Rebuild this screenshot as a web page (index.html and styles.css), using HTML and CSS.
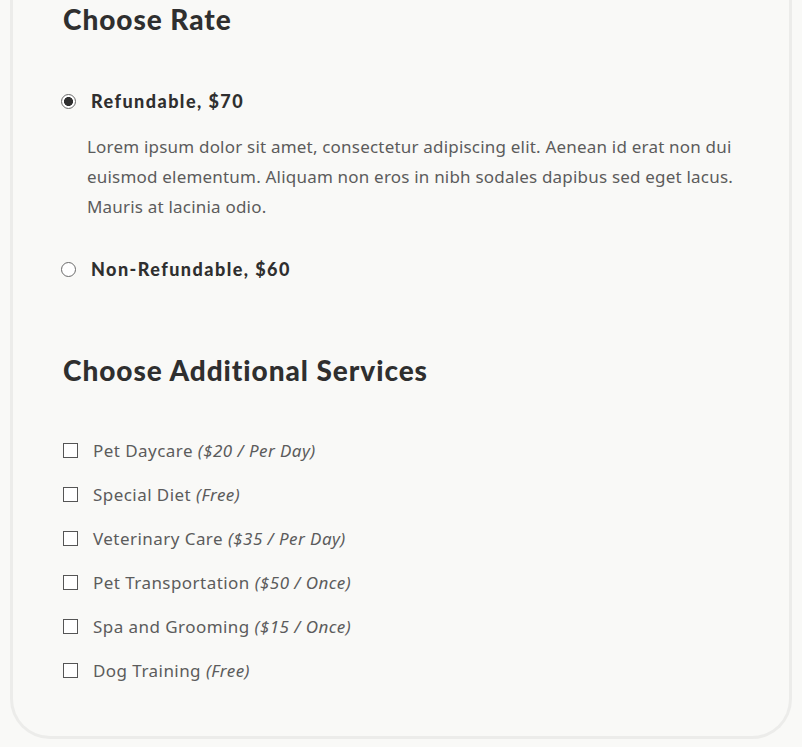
FILE: index.html
```html
<!DOCTYPE html>
<html lang="en">
<head>
<meta charset="utf-8">
<title>Choose Rate</title>
<link rel="stylesheet" href="styles.css">
</head>
<body>
<div class="page">
  <section class="card">
    <h2 class="title">Choose Rate</h2>
    <div class="rates">
      <label class="rate">
        <input type="radio" name="rate" class="radio" checked>
        <span class="rate-name">Refundable, $70</span>
      </label>
      <p class="rate-desc">Lorem ipsum dolor sit amet, consectetur adipiscing elit. Aenean id erat non dui euismod elementum. Aliquam non eros in nibh sodales dapibus sed eget lacus. Mauris at lacinia odio.</p>
      <label class="rate rate-second">
        <input type="radio" name="rate" class="radio">
        <span class="rate-name">Non-Refundable, $60</span>
      </label>
    </div>

    <h2 class="title title-services">Choose Additional Services</h2>
    <ul class="services">
      <li><label class="service"><input type="checkbox" class="check"><span>Pet Daycare <em>($20 / Per Day)</em></span></label></li>
      <li><label class="service"><input type="checkbox" class="check"><span>Special Diet <em>(Free)</em></span></label></li>
      <li><label class="service"><input type="checkbox" class="check"><span>Veterinary Care <em>($35 / Per Day)</em></span></label></li>
      <li><label class="service"><input type="checkbox" class="check"><span>Pet Transportation <em>($50 / Once)</em></span></label></li>
      <li><label class="service"><input type="checkbox" class="check"><span>Spa and Grooming <em>($15 / Once)</em></span></label></li>
      <li><label class="service"><input type="checkbox" class="check"><span>Dog Training <em>(Free)</em></span></label></li>
    </ul>
  </section>
</div>
</body>
</html>
```
FILE: styles.css
```css
html, body {
  margin: 0;
  padding: 0;
  background: #f9f9f7;
}
body {
  font-family: "Noto Sans", "Liberation Sans", sans-serif;
  color: #595959;
}
.page {
  padding: 0 10px 7px 10px;
}
.card {
  border: 3px solid #ececea;
  border-top: none;
  border-radius: 0 0 40px 40px;
  background: #f9f9f7;
  padding: 0 50px 54px 50px;
}
.title {
  margin: 0;
  font-family: "Lato", "Liberation Sans", sans-serif;
  font-weight: 900;
  font-size: 28px;
  line-height: 38px;
  color: #2f2f2f;
  letter-spacing: 0.95px;
}
.rates {
  margin-top: 51px;
}
.rate {
  display: flex;
  align-items: center;
  height: 24px;
  gap: 15px;
}
.radio {
  appearance: none;
  -webkit-appearance: none;
  margin: 0 0 0 -2px;
  width: 15px;
  height: 15px;
  border: 1px solid #6a6a6a;
  border-radius: 50%;
  background: #fff;
  box-sizing: border-box;
  flex: none;
}
.radio:checked {
  background: radial-gradient(circle, #2f2f2f 0 4.2px, #fff 4.8px);
  border-color: #6a6a6a;
}
.rate-name {
  font-family: "Lato", "Liberation Sans", sans-serif;
  font-weight: 900;
  font-size: 18px;
  color: #2f2f2f;
  letter-spacing: 1.45px;
}
.rate-desc {
  margin: 19px 0 0 24px;
  font-size: 17px;
  line-height: 30px;
  color: #5c5c5c;
  letter-spacing: 0.2px;
  max-width: 655px;
}
.rate-second {
  margin-top: 35px;
}
.title-services {
  margin-top: 70px;
}
.services {
  list-style: none;
  margin: 49px 0 0 0;
  padding: 0;
  display: flex;
  flex-direction: column;
  gap: 20px;
}
.service {
  display: flex;
  align-items: center;
  height: 24px;
  gap: 15px;
  font-size: 17px;
  color: #5c5c5c;
  letter-spacing: 0.45px;
}
.service em {
  font-style: italic;
}
.check {
  appearance: none;
  -webkit-appearance: none;
  margin: 0;
  width: 15px;
  height: 15px;
  border: 1.5px solid #555;
  background: #fff;
  box-sizing: border-box;
  flex: none;
}
```
